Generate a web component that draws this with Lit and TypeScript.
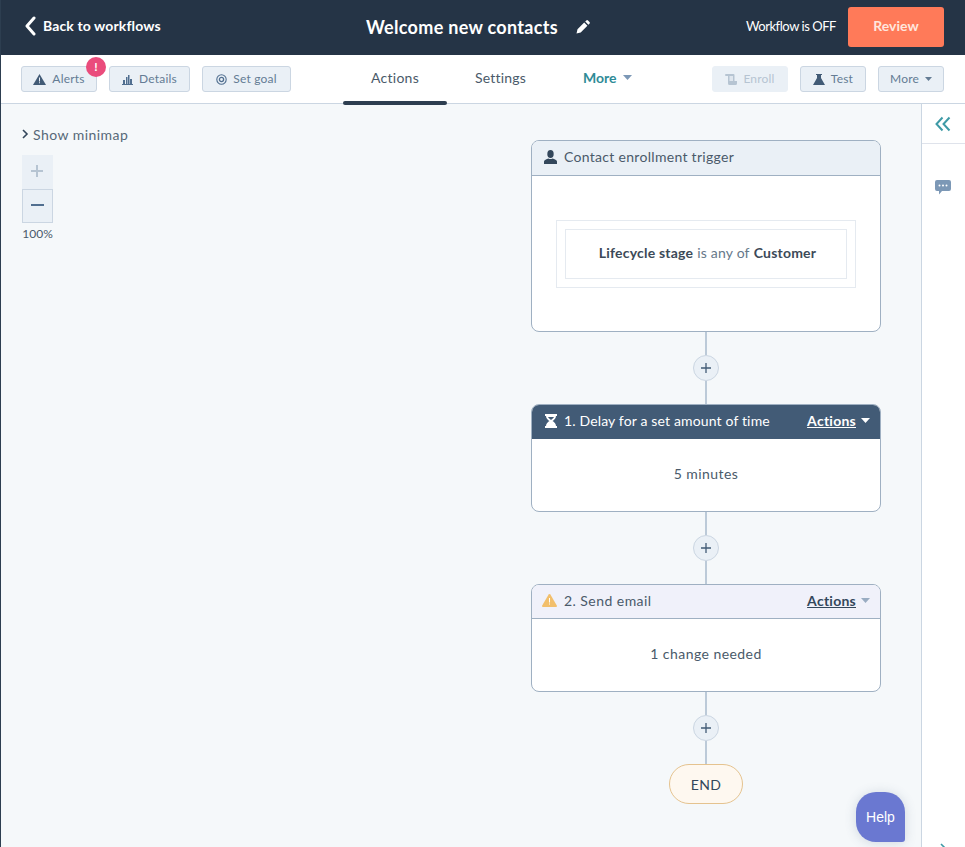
import { LitElement, html, css, svg } from 'lit'
import { customElement } from 'lit/decorators.js'

const caret = svg`<svg class="caret" width="9" height="5" viewBox="0 0 9 5"><path d="M0 0h9L4.5 5z" fill="currentColor"/></svg>`

const icons = {
  back: svg`<svg width="12" height="20" viewBox="0 0 12 20"><path d="M10 2L3 10l7 8" fill="none" stroke="#fff" stroke-width="3" stroke-linecap="round" stroke-linejoin="round"/></svg>`,
  pencil: svg`<svg width="15" height="15" viewBox="0 0 15 15"><path d="M.5 14.500l1-4.200 6.700-6.700 3.200 3.200-6.700 6.700zM9.200 2.600l1.100-1.100a1.200 1.200 0 0 1 1.700 0l1.500 1.500a1.200 1.200 0 0 1 0 1.700l-1.100 1.100z" fill="#fff"/></svg>`,
  alert: svg`<svg width="13" height="11" viewBox="0 0 13 11"><path d="M6.500 0L13 11H0z" fill="#425b76"/><path d="M6 3.500h1v4H6zM6 8.300h1v1H6z" fill="#eaf0f6"/></svg>`,
  bars: svg`<svg width="11" height="11" viewBox="0 0 11 11"><path d="M1 6h2v4H1zM4 3h1.500v7H4zM6 1h1.500v9H6zM8 5h2v5H8zM0 10h11v1H0z" fill="#516f90"/></svg>`,
  goal: svg`<svg width="11" height="11" viewBox="0 0 11 11"><circle cx="5.500" cy="5.500" r="4.700" fill="none" stroke="#516f90" stroke-width="1.100"/><circle cx="5.500" cy="5.500" r="2.100" fill="none" stroke="#516f90" stroke-width="1.300"/></svg>`,
  enroll: svg`<svg width="12" height="11" viewBox="0 0 12 11"><path d="M1 0h7.500a1 1 0 0 1 1 1v6H12v2.500a1.500 1.500 0 0 1-1.500 1.500H4.500A1.500 1.500 0 0 1 3 9.500V2H1a1 1 0 0 1 0-2z" fill="#b6c4d2"/><path d="M4.500 2h3.500v5H4.500z" fill="#dfe6ee"/></svg>`,
  flask: svg`<svg width="12" height="11" viewBox="0 0 12 11"><path d="M3 0h6v1H8v3l4 7H0l4-7V1H3z" fill="#425b76"/></svg>`,
  chat: svg`<svg width="16" height="15" viewBox="0 0 16 15"><path d="M2 0h12a2 2 0 0 1 2 2v7a2 2 0 0 1-2 2H7l-3 3.500V11H2a2 2 0 0 1-2-2V2a2 2 0 0 1 2-2z" fill="#7c98b6"/><circle cx="4.500" cy="5.500" r="1" fill="#fff"/><circle cx="8" cy="5.500" r="1" fill="#fff"/><circle cx="11.500" cy="5.500" r="1" fill="#fff"/></svg>`,
  person: svg`<svg width="13" height="14" viewBox="0 0 13 14"><ellipse cx="6.500" cy="4" rx="3.200" ry="4" fill="#33475b"/><path d="M0 14v-2.400C0 9.800 2.500 9 4.500 8.400c1.200.7 2.800.7 4 0 2 .6 4.500 1.400 4.500 3.200V14z" fill="#33475b"/></svg>`,
  hourglass: svg`<svg width="14" height="14" viewBox="0 0 14 14"><path d="M1 0h12v2h-1c0 2.500-2 4-3.500 5C10 8 12 9.500 12 12h1v2H1v-2h1c0-2.500 2-4 3.500-5C4 6 2 4.500 2 2H1z" fill="#fff"/><path d="M4 3h6c-.5 1-1.800 2.200-3 3-1.200-.8-2.500-2-3-3z" fill="#425b76"/></svg>`,
  warn: svg`<svg width="15" height="13" viewBox="0 0 15 13"><path d="M7.500 0c.4 0 .7.200.9.500l6.400 11c.4.700-.1 1.500-.9 1.500H1.100c-.8 0-1.300-.8-.9-1.500L6.600.5c.2-.3.500-.5.900-.5z" fill="#f2bf6c"/><path d="M7 4h1v4.500H7zM7 9.500h1v1H7z" fill="#fff"/></svg>`,
  collapse: svg`<svg width="16" height="16" viewBox="0 0 16 16"><path d="M7.500 1.500L1.500 8l6 6.500M14.500 1.500L8.500 8l6 6.500" fill="none" stroke="#3e9aa6" stroke-width="2"/></svg>`,
}

@customElement('app-root')
export class AppRoot extends LitElement {
  static styles = css`
    :host {
      display: flex;
      flex-direction: column;
      position: relative;
      height: 847px;
      overflow: hidden;
      font-family: Lato, 'Open Sans', sans-serif;
      color: #33475b;
      background: #fff;
      border-left: 1px solid #2d3e50;
      box-sizing: border-box;
    }
    svg { display: block; flex: none; }

    .top {
      flex: none;
      height: 55px;
      background: #253446;
      color: #fff;
      display: flex;
      align-items: center;
      padding: 0 21px 0 23px;
      box-sizing: border-box;
    }
    .back {
      display: flex;
      align-items: center;
      gap: 7px;
      font-size: 14px;
      font-weight: 700;
      letter-spacing: .12px;
      width: 342px;
      padding-bottom: 4px;
    }
    .title {
      display: flex;
      align-items: center;
      gap: 18px;
      font-size: 18px;
      font-weight: 700;
      letter-spacing: .3px;
      padding-bottom: 2px;
    }
    .status { margin-left: auto; font-size: 13px; letter-spacing: -.45px; padding-bottom: 3px; }
    .review {
      margin: 0 0 1px 12px;
      width: 96px;
      height: 40px;
      background: #ff7a59;
      border-radius: 3px;
      display: flex;
      align-items: center;
      justify-content: center;
      font-size: 14px;
      font-weight: 700;
      color: #ffe6dd;
      padding-bottom: 3px;
      box-sizing: border-box;
    }

    .bar {
      flex: none;
      height: 49px;
      display: flex;
      align-items: center;
      padding: 0 20px;
      border-bottom: 1px solid #cbd6e2;
      box-sizing: border-box;
    }
    .btns { display: flex; gap: 12px; }
    .btn {
      position: relative;
      height: 26px;
      box-sizing: border-box;
      display: flex;
      align-items: center;
      justify-content: center;
      gap: 6px;
      background: #eaf0f6;
      border: 1px solid #cbd6e2;
      border-radius: 3px;
      font-size: 12px;
      letter-spacing: .2px;
      color: #647c94;
    }
    .btn > span { padding-bottom: 2px; }
    .btn.off { border-color: #eaf0f6; color: #b6c4d2; }
    .alerts { width: 76px; }
    .details { width: 81px; }
    .goal { width: 89px; }
    .enroll { width: 76px; }
    .test { width: 66px; }
    .more { width: 66px; }
    .more .caret { width: 7px; height: 4px; }
    .btn .badge {
      position: absolute;
      top: -10px;
      right: -10px;
      width: 20px;
      height: 20px;
      padding: 0;
      border-radius: 50%;
      background: #ea4c7c;
      color: #fff;
      font-size: 12px;
      font-weight: 700;
      text-align: center;
      line-height: 20px;
    }
    .tabs { display: flex; margin-left: 52px; align-self: stretch; }
    .tab {
      position: relative;
      width: 104px;
      display: flex;
      align-items: center;
      justify-content: center;
      font-size: 14px;
      letter-spacing: .25px;
      color: #4a5a6a;
      padding-bottom: 4px;
      box-sizing: border-box;
    }
    .tab.settings { padding-left: 3px; letter-spacing: .2px; }
    .tab.active::after {
      content: '';
      position: absolute;
      left: 0;
      right: 0;
      bottom: -2px;
      height: 4px;
      border-radius: 2px;
      background: #2d3e50;
    }
    .tab.link {
      justify-content: flex-start;
      padding-left: 32px;
      gap: 6px;
      font-weight: 700;
      letter-spacing: 0;
      color: #2f8b97;
    }
    .tab.link .caret { color: #7c98b6; }
    .right { margin-left: auto; padding-right: 1px; }

    .body { flex: 1; display: flex; min-height: 0; }
    .canvas {
      flex: 1;
      background: #f5f8fa;
      display: flex;
      justify-content: space-between;
      padding: 21px 40px 0 20px;
    }
    .tools { display: flex; flex-direction: column; align-items: flex-start; }
    .minimap {
      display: flex;
      align-items: center;
      gap: 4px;
      font-size: 14px;
      color: #566878;
      letter-spacing: .45px;
      height: 18px;
    }
    .minimap svg { margin-left: 1px; }
    .zoom {
      margin-top: 12px;
      margin-left: 1px;
      width: 31px;
      display: flex;
      flex-direction: column;
    }
    .zoom div {
      height: 34px;
      background: #eaf0f6;
      display: flex;
      align-items: center;
      justify-content: center;
    }
    .zoom svg { margin-right: 1px; margin-bottom: 2px; }
    .zoom .on { border: 1px solid #cbd6e2; box-sizing: border-box; }
    .pct { margin-top: 3px; margin-left: 1px; width: 31px; text-align: center; font-size: 12px; color: #4a5a6a; }

    .flow { width: 350px; display: flex; flex-direction: column; align-items: center; padding-top: 15px; }
    .card {
      width: 350px;
      box-sizing: border-box;
      background: #fff;
      border: 1px solid #9fb0c2;
      border-radius: 8px;
      overflow: hidden;
      display: flex;
      flex-direction: column;
    }
    .head {
      flex: none;
      height: 34px;
      box-sizing: border-box;
      display: flex;
      align-items: center;
      gap: 6px;
      padding: 0 12px 2px;
      font-size: 14px;
      letter-spacing: .15px;
      color: #4a5a6a;
      border-bottom: 1px solid #9fb0c2;
    }
    .head.trigger { height: 35px; background: #eaf0f6; gap: 7px; letter-spacing: .3px; }
    .head.trigger > span { padding-bottom: 2px; }
    .head.delay { background: #425b76; color: #fff; border-bottom-color: #425b76; }
    .head.email { background: #f0f1fa; padding-left: 10px; gap: 7px; letter-spacing: .45px; }
    .head .act {
      margin-left: auto;
      display: flex;
      align-items: center;
      gap: 5px;
      font-weight: 700;
      text-decoration: underline;
      letter-spacing: .25px;
      color: #33475b;
      margin-right: -2px;
    }
    .head.delay .act { color: #fff; }
    .head.email .caret { color: #99acc2; }
    .text {
      flex: 1;
      display: flex;
      align-items: center;
      justify-content: center;
      font-size: 14px;
      color: #4a5a6a;
      letter-spacing: .45px;
      padding-bottom: 4px;
    }
    .small { height: 108px; }
    .big { height: 192px; }
    .big .wrap { flex: 1; padding: 44px 24px 0; }
    .outer { border: 1px solid #e5eaf0; padding: 8px; }
    .inner {
      border: 1px solid #e5eaf0;
      height: 50px;
      box-sizing: border-box;
      display: flex;
      align-items: center;
      justify-content: center;
      font-size: 14px;
      letter-spacing: .2px;
      color: #66788a;
      gap: 4px;
      padding: 0 0 4px 3px;
    }
    .inner b { font-weight: 700; color: #3c4a58; }
    .link-v { height: 72px; display: flex; flex-direction: column; align-items: center; }
    .line { flex: 1; width: 2px; background: #bccad8; }
    .plus {
      flex: none;
      width: 26px;
      height: 26px;
      box-sizing: border-box;
      border-radius: 50%;
      background: #eaf0f6;
      border: 1px solid #cbd6e2;
      display: flex;
      align-items: center;
      justify-content: center;
    }
    .end {
      width: 74px;
      height: 40px;
      box-sizing: border-box;
      border-radius: 20px;
      border: 1px solid #e5c38f;
      background: #fef8f0;
      display: flex;
      align-items: center;
      justify-content: center;
      font-size: 14px;
      color: #33475b;
      letter-spacing: .3px;
    }

    .panel {
      flex: none;
      width: 43px;
      border-left: 1px solid #cbd6e2;
      display: flex;
      flex-direction: column;
      align-items: center;
    }
    .collapse {
      align-self: stretch;
      height: 40px;
      box-sizing: border-box;
      border-bottom: 1px solid #dfe3eb;
      display: flex;
      align-items: center;
      justify-content: center;
      padding-right: 1px;
    }
    .chat { margin-top: 36px; margin-right: 1px; }
    .peek { margin-top: auto; margin-bottom: -6px; }

    .help {
      position: absolute;
      left: 855px;
      top: 792px;
      width: 49px;
      height: 50px;
      background: #6a78d1;
      border-radius: 20px 20px 3px 20px;
      box-shadow: 0 1px 12px rgba(66, 91, 118, .2);
      display: flex;
      align-items: center;
      justify-content: center;
      font-family: 'Liberation Sans', Arial, sans-serif;
      font-size: 14px;
      color: #fff;
    }
  `

  private connector() {
    return html`<div class="link-v">
      <div class="line"></div>
      <div class="plus">
        <svg width="10" height="10" viewBox="0 0 10 10"><path d="M5 0v10M0 5h10" stroke="#425b76" stroke-width="1.300"/></svg>
      </div>
      <div class="line"></div>
    </div>`
  }

  render() {
    return html`
      <header class="top">
        <div class="back">${icons.back}<span>Back to workflows</span></div>
        <div class="title"><span>Welcome new contacts</span>${icons.pencil}</div>
        <div class="status">Workflow is OFF</div>
        <div class="review">Review</div>
      </header>

      <nav class="bar">
        <div class="btns">
          <div class="btn alerts">${icons.alert}<span>Alerts</span><span class="badge">!</span></div>
          <div class="btn details">${icons.bars}<span>Details</span></div>
          <div class="btn goal">${icons.goal}<span>Set goal</span></div>
        </div>
        <div class="tabs">
          <div class="tab active">Actions</div>
          <div class="tab settings">Settings</div>
          <div class="tab link">More ${caret}</div>
        </div>
        <div class="btns right">
          <div class="btn off enroll">${icons.enroll}<span>Enroll</span></div>
          <div class="btn test">${icons.flask}<span>Test</span></div>
          <div class="btn more"><span>More</span>${caret}</div>
        </div>
      </nav>

      <div class="body">
        <main class="canvas">
          <div class="tools">
            <div class="minimap">
              <svg width="7" height="10" viewBox="0 0 7 10"><path d="M1 1l4 4-4 4" fill="none" stroke="#33475b" stroke-width="1.600"/></svg>
              <span>Show minimap</span>
            </div>
            <div class="zoom">
              <div><svg width="12" height="12" viewBox="0 0 12 12"><path d="M6 0v12M0 6h12" stroke="#b6c4d2" stroke-width="2"/></svg></div>
              <div class="on"><svg width="13" height="2" viewBox="0 0 13 2"><path d="M0 1h13" stroke="#516f90" stroke-width="2"/></svg></div>
            </div>
            <div class="pct">100%</div>
          </div>

          <div class="flow">
            <section class="card big">
              <div class="head trigger">${icons.person}<span>Contact enrollment trigger</span></div>
              <div class="wrap">
                <div class="outer">
                  <div class="inner"><b>Lifecycle stage</b> is any of <b>Customer</b></div>
                </div>
              </div>
            </section>
            ${this.connector()}
            <section class="card small">
              <div class="head delay">${icons.hourglass}<span>1. Delay for a set amount of time</span>
                <span class="act"><span>Actions</span>${caret}</span></div>
              <div class="text">5 minutes</div>
            </section>
            ${this.connector()}
            <section class="card small">
              <div class="head email">${icons.warn}<span>2. Send email</span>
                <span class="act"><span>Actions</span>${caret}</span></div>
              <div class="text">1 change needed</div>
            </section>
            ${this.connector()}
            <div class="end">END</div>
          </div>
        </main>

        <aside class="panel">
          <div class="collapse">${icons.collapse}</div>
          <div class="chat">${icons.chat}</div>
          <div class="peek"><svg width="7" height="10" viewBox="0 0 7 10"><path d="M1 1l4 4-4 4" fill="none" stroke="#3e9aa6" stroke-width="1.600"/></svg></div>
        </aside>
      </div>

      <div class="help">Help</div>
    `
  }
}
